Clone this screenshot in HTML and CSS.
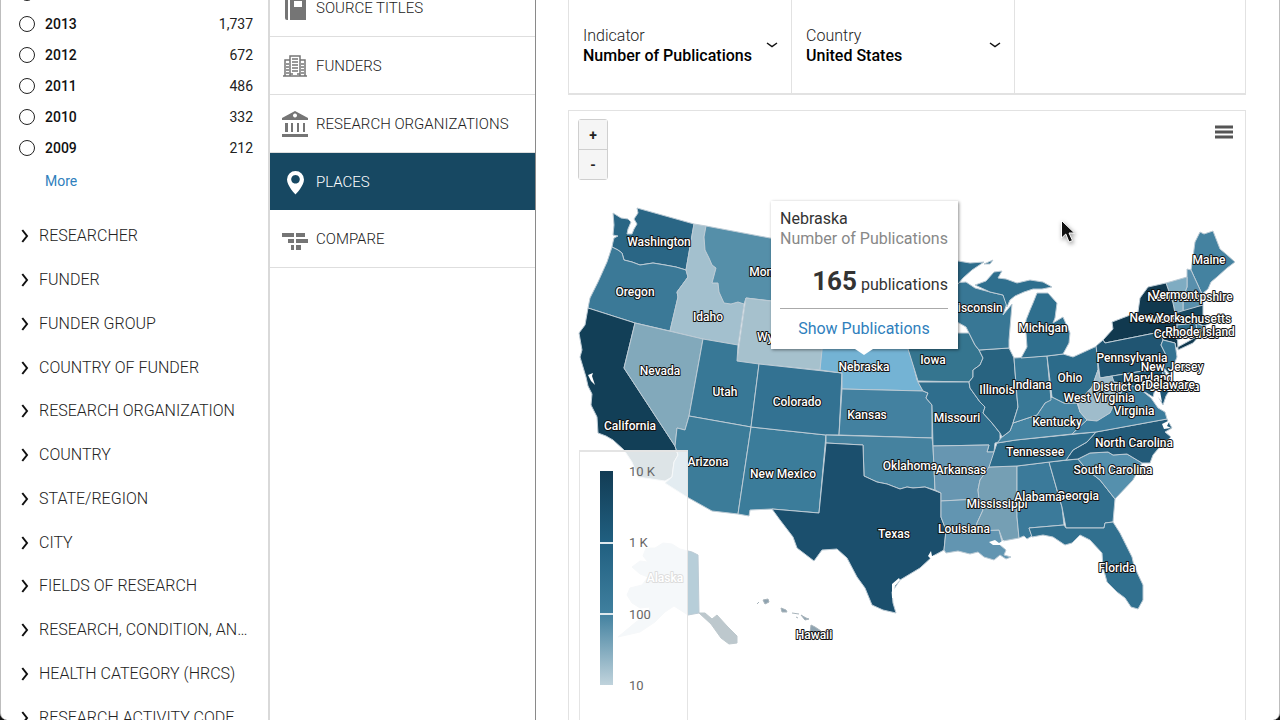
FILE: index.html
```html
<!DOCTYPE html>
<html lang="en">
<head>
<meta charset="utf-8">
<title>Places</title>
<link rel="stylesheet" href="styles.css">
</head>
<body>
<div class="app">
  <aside class="filters">
    <ul class="years">
      <li class="year"><label><input type="radio" name="year"><span>2014</span></label><span class="count">2,105</span></li>
      <li class="year"><label><input type="radio" name="year"><span>2013</span></label><span class="count">1,737</span></li>
      <li class="year"><label><input type="radio" name="year"><span>2012</span></label><span class="count">672</span></li>
      <li class="year"><label><input type="radio" name="year"><span>2011</span></label><span class="count">486</span></li>
      <li class="year"><label><input type="radio" name="year"><span>2010</span></label><span class="count">332</span></li>
      <li class="year"><label><input type="radio" name="year"><span>2009</span></label><span class="count">212</span></li>
    </ul>
    <a class="more" href="#">More</a>
    <ul class="facets">
      <li><button class="facet"><svg width="8" height="14" viewBox="0 0 8 14"><path d="M1.300 1 L6 7 L1.300 13"/></svg>RESEARCHER</button></li>
      <li><button class="facet"><svg width="8" height="14" viewBox="0 0 8 14"><path d="M1.300 1 L6 7 L1.300 13"/></svg>FUNDER</button></li>
      <li><button class="facet"><svg width="8" height="14" viewBox="0 0 8 14"><path d="M1.300 1 L6 7 L1.300 13"/></svg>FUNDER GROUP</button></li>
      <li><button class="facet"><svg width="8" height="14" viewBox="0 0 8 14"><path d="M1.300 1 L6 7 L1.300 13"/></svg>COUNTRY OF FUNDER</button></li>
      <li><button class="facet"><svg width="8" height="14" viewBox="0 0 8 14"><path d="M1.300 1 L6 7 L1.300 13"/></svg>RESEARCH ORGANIZATION</button></li>
      <li><button class="facet"><svg width="8" height="14" viewBox="0 0 8 14"><path d="M1.300 1 L6 7 L1.300 13"/></svg>COUNTRY</button></li>
      <li><button class="facet"><svg width="8" height="14" viewBox="0 0 8 14"><path d="M1.300 1 L6 7 L1.300 13"/></svg>STATE/REGION</button></li>
      <li><button class="facet"><svg width="8" height="14" viewBox="0 0 8 14"><path d="M1.300 1 L6 7 L1.300 13"/></svg>CITY</button></li>
      <li><button class="facet"><svg width="8" height="14" viewBox="0 0 8 14"><path d="M1.300 1 L6 7 L1.300 13"/></svg>FIELDS OF RESEARCH</button></li>
      <li><button class="facet"><svg width="8" height="14" viewBox="0 0 8 14"><path d="M1.300 1 L6 7 L1.300 13"/></svg>RESEARCH, CONDITION, AN…</button></li>
      <li><button class="facet"><svg width="8" height="14" viewBox="0 0 8 14"><path d="M1.300 1 L6 7 L1.300 13"/></svg>HEALTH CATEGORY (HRCS)</button></li>
      <li><button class="facet"><svg width="8" height="14" viewBox="0 0 8 14"><path d="M1.300 1 L6 7 L1.300 13"/></svg>RESEARCH ACTIVITY CODE</button></li>
    </ul>
  </aside>

  <nav class="views">
    <a class="view" href="#">
      <svg width="28" height="28" viewBox="0 0 28 28"><path d="M4 2h3v24H6a2 2 0 0 1-2-2zM9 2h16v24H9z"/><path fill="#fff" d="M13 7h8v6h-8z"/></svg>
      SOURCE TITLES
    </a>
    <a class="view" href="#">
      <svg width="28" height="28" viewBox="0 0 28 28"><path fill="none" stroke="#757575" stroke-width="1.500" d="M9 24V4h10v20M9 8H4v16M19 8h5v16"/><path stroke="#757575" stroke-width="1.600" d="M11 7h6M11 10h6M11 13h6M11 16h6M11 19h6M5 12h3M5 15h3M5 18h3M5 21h3M20 12h3M20 15h3M20 18h3M20 21h3M2 24h24M9 22h3M16 22h3"/></svg>
      FUNDERS
    </a>
    <a class="view" href="#">
      <svg width="28" height="28" viewBox="0 0 28 28"><path fill-rule="evenodd" d="M14 1 27 8v2H1V8zM14 3.500a2 2 0 1 0 .01 0zM4 13h3v9H4zM10 13h2v9h-2zM16 13h2v9h-2zM22 13h2v9h-2zM1 24h26v3H1z"/></svg>
      RESEARCH ORGANIZATIONS
    </a>
    <a class="view active" href="#">
      <svg width="28" height="28" viewBox="0 0 28 28"><path fill-rule="evenodd" d="M14.500 3A8.500 8.500 0 0 0 6 11.500C6 18 14.500 26.500 14.500 26.500S23 18 23 11.500A8.500 8.500 0 0 0 14.500 3zM14.500 7a4.300 4.300 0 1 1-.01 0z"/></svg>
      PLACES
    </a>
    <a class="view" href="#">
      <svg width="28" height="28" viewBox="0 0 28 28"><path d="M1 8h12v4H1zM15 8h9v4h-9zM7 14h6v4H7zM15 14h12v4H15zM10 20h3v5h-3zM15 20h5v5h-5z"/></svg>
      COMPARE
    </a>
  </nav>

  <main class="content">
    <div class="selectors">
      <div class="selector">
        <label for="indicator">Indicator</label>
        <select id="indicator"><option>Number of Publications</option></select>
        <svg class="caret" width="12" height="8" viewBox="0 0 12 8"><path d="M1 2 L6 5.500 L11 2"/></svg>
      </div>
      <div class="selector">
        <label for="country">Country</label>
        <select id="country"><option>United States</option></select>
        <svg class="caret" width="12" height="8" viewBox="0 0 12 8"><path d="M1 2 L6 5.500 L11 2"/></svg>
      </div>
    </div>

    <section class="map-panel">
      <svg class="map" viewBox="569 111 676 609">
        <g class="states">
          <path fill="#2a6685" d="M637 208 694 224 686 270 676 267 665 265 653 263 640 265 632 262 624 260 622 253 618 250 612 247 613 242 614 238 618 236 613 235 614 225 613 213 621 218 628 219 631 222 628 229 627 234 632 234 634 229 637 224 634 219 638 213z"/>
          <path fill="#3b7997" d="M612 247 618 250 622 253 624 260 632 262 640 265 653 263 665 265 676 267 686 270 688 277 677 292 678 297 670 331 635 323 588 308 590 298 598 282 607 262z"/>
          <path fill="#a3c0ce" d="M694 224 706 226 704 237 705 250 709 258 712 265 716 268 712 283 718 283 719 292 724 303 731 304 738 302 744 304 738 345 703 339 670 331 678 297 677 292 688 277 686 270z"/>
          <path fill="#558fa9" d="M706 226 770 238 840 247 834 308 746 298 744 304 738 302 731 304 724 303 719 292 718 283 712 283 716 268 712 265 709 258 705 250 704 237z"/>
          <path fill="#a6c1cd" d="M746 298 828 308 820 370 759 364 737 361z"/>
          <path fill="#123f57" d="M588 308 635 323 624 368 675 446 678 455 674 462 672 477 665 481 638 477 632 462 624 450 613 440 606 436 598 433 597 417 591 405 592 394 588 386 586 377 580 357 582 350 579 333 585 325z"/>
          <path fill="#82a9bb" d="M635 323 703 339 689 416 685 430 677 428 675 446 624 368z"/>
          <path fill="#387896" d="M703 339 738 345 737 361 759 364 751 427 689 416z"/>
          <path fill="#3c7c99" d="M689 416 751 427 738 514 712 511 687 497 665 483 672 477 674 462 678 455 675 446 677 428 685 430z"/>
          <path fill="#3b7c9a" d="M751 427 826 435 819 513 772 509 750 510 749 516 738 514z"/>
          <path fill="#337292" d="M759 364 842 373 839 435 826 435 751 427z"/>
          <path fill="#74b3d4" d="M824 330 905 335 910 352 914 368 917 380 923 391 842 389 842 373 820 370z"/>
          <path fill="#4381a0" d="M842 389 923 391 928 393 926 398 932 405 932 438 839 435z"/>
          <path fill="#45829f" d="M826 435 932 438 933 446 935 490 925 487 913 488 907 487 900 489 887 484 877 482 864 476 863 445 826 443z"/>
          <path fill="#1b4f6d" d="M826 443 863 445 864 476 877 482 887 484 900 489 907 487 913 488 925 487 941 493 941 517 946 530 944 550 933 556 920 568 900 580 892 592 893 603 896 613 883 610 872 605 865 588 857 577 847 558 837 549 822 550 814 561 797 548 793 537 780 520 772 509 819 513z"/>
          <path fill="#35758f" d="M903 333 969 333 975 345 979 350 983 358 980 365 973 370 973 377 969 382 918 381 914 368z"/>
          <path fill="#2f6e8d" d="M918 382 969 382 970 388 980 402 985 407 983 413 992 423 1000 433 1000 442 995 443 994 452 987 452 989 445 933 446 932 405 926 398 928 393 923 391z"/>
          <path fill="#6796b1" d="M933 446 989 445 987 452 994 452 992 465 980 480 978 490 979 499 941 501 941 493 935 490z"/>
          <path fill="#6295b1" d="M941 501 979 499 983 510 977 523 976 531 999 530 1002 542 1000 545 1006 550 1004 555 1011 557 1006 559 1000 555 994 560 984 557 978 552 970 554 958 551 946 553 944 550 946 530 941 517z"/>
          <path fill="#759fb4" d="M989 467 1017 466 1017 517 1019 538 1003 541 999 530 976 531 977 523 983 510 979 499 978 490 980 480z"/>
          <path fill="#3b7a9a" d="M1017 466 1049 462 1057 490 1062 507 1064 525 1029 528 1032 536 1027 539 1024 536 1019 538 1017 517z"/>
          <path fill="#316f8e" d="M1049 462 1078 459 1087 470 1100 480 1115 499 1113 522 1105 523 1104 528 1066 528 1062 507 1057 490z"/>
          <path fill="#31708f" d="M1029 528 1064 525 1066 528 1104 528 1105 523 1113 522 1120 533 1132 557 1134 566 1143 585 1143 600 1138 609 1131 607 1125 598 1117 592 1107 582 1103 567 1102 553 1090 540 1080 535 1072 543 1065 545 1053 537 1043 535 1032 537z"/>
          <path fill="#5590ad" d="M1078 459 1090 453 1108 452 1113 455 1127 454 1142 463 1133 480 1115 499 1100 480 1087 470z"/>
          <path fill="#235b79" d="M1096 432 1167 419 1172 428 1165 432 1171 437 1158 449 1153 455 1150 463 1142 463 1127 454 1113 455 1108 452 1090 453 1078 459 1066 460 1073 450 1087 442z"/>
          <path fill="#2d6c8b" d="M997 443 1016 440 1096 432 1087 442 1073 450 1066 460 1017 466 989 467 994 452z"/>
          <path fill="#4584a2" d="M1002 437 1010 431 1013 423 1037 415 1045 403 1052 397 1064 403 1077 403 1080 412 1087 420 1072 434 1016 440 997 443z"/>
          <path fill="#286380" d="M979 350 1009 348 1014 358 1017 397 1018 407 1013 423 1010 431 1002 437 1000 433 992 423 983 413 985 407 980 402 970 388 969 382 973 377 973 370 980 365 983 358z"/>
          <path fill="#387896" d="M1014 358 1047 356 1051 400 1045 403 1037 415 1013 423 1018 407 1017 397z"/>
          <path fill="#2c6b8a" d="M1047 356 1063 354 1073 357 1097 346 1098 370 1092 387 1078 403 1064 403 1052 397z"/>
          <path fill="#387795" d="M950 283 966 282 975 288 990 292 1003 295 1007 303 1003 315 1012 304 1009 340 1009 348 979 350 975 345 969 333 966 327 950 318z"/>
          <path fill="#2e6d8c" d="M940 259 958 261 970 263 984 262 972 270 963 278 958 284 940 284zM984 264 993 260 990 264z"/>
          <path fill="#2f6f8e" d="M975 285 986 281 994 272 1002 271 998 278 1006 279 1017 283 1030 280 1043 282 1052 287 1042 289 1033 289 1024 292 1015 296 1010 300 1007 307 1003 295 990 292z"/>
          <path fill="#2f6f8e" d="M1037 293 1048 293 1057 303 1055 318 1053 323 1063 317 1070 333 1069 343 1063 354 1047 356 1021 358 1027 347 1026 333 1026 320 1030 310 1033 303z"/>
          <path fill="#4482a0" d="M1200 232 1204 234 1213 231 1220 249 1226 254 1235 262 1227 268 1217 277 1211 282 1208 289 1202 294 1191 270 1193 257 1195 242z"/>
          <path fill="#598fac" d="M1187 269 1191 270 1202 294 1203 305 1183 312 1183 297 1187 287z"/>
          <path fill="#7facc2" d="M1166 283 1187 277 1187 287 1183 297 1183 312 1175 313 1173 303z"/>
          <path fill="#11394f" d="M1166 283 1148 287 1140 298 1138 312 1112 322 1113 329 1103 340 1105 343 1160 332 1163 340 1175 343 1176 348 1200 335 1193 343 1178 350 1177 323 1173 303z"/>
          <path fill="#174760" d="M1175 313 1203 305 1203 315 1213 322 1204 326 1196 323 1177 325z"/>
          <path fill="#2e6b89" d="M1177 325 1196 323 1197 332 1177 340z"/>
          <path fill="#4685a3" d="M1196 323 1203 326 1201 331 1197 332z"/>
          <path fill="#205572" d="M1103 340 1105 343 1160 332 1163 340 1161 345 1167 357 1162 368 1100 378 1096 346z"/>
          <path fill="#347392" d="M1163 340 1175 343 1177 357 1170 375 1163 367 1167 357 1161 345z"/>
          <path fill="#9fbccb" d="M1098 370 1100 378 1112 376 1114 382 1128 384 1117 398 1110 413 1097 421 1087 420 1080 412 1078 403 1092 387z"/>
          <path fill="#3c7c9c" d="M1128 384 1140 389 1151 398 1158 408 1165 412 1167 419 1096 432 1072 434 1087 420 1097 421 1110 413 1117 398z"/>
          <path fill="#1f5674" d="M1112 376 1162 368 1165 386 1171 388 1166 396 1163 405 1159 398 1156 385 1153 397 1140 389 1128 384 1114 382z"/>
          <path fill="#457f9c" d="M1162 368 1165 372 1171 388 1165 386z"/>
          <path fill="#b7ced9" d="M698 555 692 552 680 549 672 544 663 543 655 548 646 548 643 556 648 562 640 561 632 567 640 574 648 577 642 585 630 588 627 595 632 603 640 608 650 607 648 614 636 622 618 637 640 632 655 622 665 612 674 606 688 615 699 613z"/>
          <path fill="#bdc8cd" stroke="#bdc8cd" d="M699 613 705 613 712 619 717 615 727 626 737 636 737 643 729 644 721 638 711 624z"/>
          <g fill="#8fa3b0" stroke="#a8b4bb"><path d="M763 600l5-1 1 3-4 2zM757 604l2-2M781 608l5 2 1 2-5 0zM792 613l7 1M796 617l2 1M801 615l5 3 3 1-4 1zM811 625l4 2 6 4-3 5-5 4-3-7z"/></g>
        </g>
        <g fill="#fff"><path d="M588 375l5-2-1 3 3 9-4-4-2-4zM892 584l7-6 1 2-5 6-2 12-1 0zM928 556l3-5 1 5 5-1-6 4zM1157 383l3 8 2 11-4-5-4-10zM1162 424l8-4-3 6 4 2-7 1zM989 542l6-2 4 3 5-3-2 5-9 0z"/></g>
        <g class="labels">
          <text x="659" y="246">Washington</text><text x="635" y="296">Oregon</text><text x="708" y="321">Idaho</text>
          <text x="773" y="276">Montana</text><text x="782" y="341">Wyoming</text><text x="660" y="375">Nevada</text>
          <text x="725" y="396">Utah</text><text x="630" y="430">California</text><text x="708" y="466">Arizona</text>
          <text x="797" y="406">Colorado</text><text x="783" y="478">New Mexico</text><text x="864" y="371">Nebraska</text>
          <text x="867" y="419">Kansas</text><text x="910" y="470">Oklahoma</text><text x="894" y="538">Texas</text>
          <text x="933" y="364">Iowa</text><text x="957" y="422">Missouri</text><text x="961" y="474">Arkansas</text>
          <text x="964" y="533">Louisiana</text><text x="997" y="508">Mississippi</text><text x="1078" y="500">Georgia</text>
          <text x="1038" y="501">Alabama</text><text x="1117" y="572">Florida</text><text x="1113" y="474">South Carolina</text>
          <text x="1134" y="447">North Carolina</text><text x="1035" y="456">Tennessee</text><text x="1057" y="426">Kentucky</text>
          <text x="975" y="312">Wisconsin</text><text x="1043" y="332">Michigan</text><text x="997" y="394">Illinois</text>
          <text x="1032" y="389">Indiana</text><text x="1070" y="382">Ohio</text><text x="1209" y="264">Maine</text>
          <text x="1190" y="301">New Hampshire</text><text x="1175" y="299">Vermont</text><text x="1190" y="323">Massachusetts</text>
          <text x="1155" y="322">New York</text><text x="1186" y="338">Connecticut</text><text x="1200" y="336">Rhode Island</text>
          <text x="1132" y="362">Pennsylvania</text><text x="1172" y="371">New Jersey</text><text x="1148" y="382">Maryland</text>
          <text x="1146" y="391">District of Columbia</text><text x="1170" y="389">Delaware</text>
          <text x="1099" y="402">West Virginia</text><text x="1134" y="415">Virginia</text>
          <text x="814" y="639">Hawaii</text><text x="665" y="582">Alaska</text>
        </g>
      </svg>

      <div class="zoom-buttons"><button>+</button><button>-</button></div>
      <button class="menu" aria-label="Chart menu"><svg width="18" height="14" viewBox="0 0 18 14"><path d="M0 2h18M0 7h18M0 12h18"/></svg></button>

      <div class="legend">
        <div class="scale"></div>
        <div class="ticks"><span>10 K</span><span>1 K</span><span>100</span><span>10</span></div>
      </div>

      <div class="tooltip">
        <div class="tip-name">Nebraska</div>
        <div class="tip-metric">Number of Publications</div>
        <div class="tip-value"><strong>165</strong> publications</div>
        <a class="tip-link" href="#">Show Publications</a>
      </div>

      <svg class="cursor" width="16" height="26" viewBox="0 0 16 26"><path d="M1.500 1.500V19L5.800 15 9 23 12.500 21.500 9 14H14.500z"/></svg>
    </section>
  </main>
</div>
</body>
</html>
```
FILE: styles.css
```css
* { box-sizing: border-box; }

body {
  margin: 0;
  background: #111;
  color: #222;
  font-family: Roboto, "Liberation Sans", sans-serif;
  font-size: 16px;
  line-height: 20px;
}

ul { list-style: none; margin: 0; padding: 0; }
a { color: #2f80bd; text-decoration: none; }
button, select { font: inherit; color: inherit; }

.app {
  display: flex;
  height: 100vh;
  overflow: hidden;
  background: #fff;
  border: solid #bdbdbd;
  border-width: 0 1px;
  border-radius: 0 0 7px 7px;
}

/* Filter column */
.filters {
  flex: none;
  width: 269px;
  border-right: 2px solid #d9d9d9;
}

.years { margin-top: -23px; padding: 0 15px 0 18px; }
.year {
  display: flex;
  align-items: center;
  justify-content: space-between;
  height: 31px;
  font-size: 14px;
}
.year label {
  display: flex;
  align-items: center;
  gap: 10px;
  color: #111;
  font-weight: 500;
}
.year input {
  appearance: none;
  width: 16px;
  height: 16px;
  margin: 0;
  border: 1px solid #222;
  border-radius: 50%;
}

.more { display: inline-block; margin: 8px 0 23px 44px; font-size: 14px; }

.facets li { height: 44px; }
.facets li:nth-child(4n) { height: 43px; }
.facet {
  display: flex;
  align-items: center;
  gap: 10px;
  width: 100%;
  height: 100%;
  padding: 0 16px 0 20px;
  border: 0;
  background: none;
  font-weight: 300;
  white-space: nowrap;
}
.facet svg { flex: none; fill: none; stroke: #111; stroke-width: 2; }

/* View navigation */
.views {
  flex: none;
  width: 266px;
  margin-top: -21px;
  border-right: 1px solid #8a8a8a;
}
.view {
  display: flex;
  align-items: center;
  gap: 7px;
  height: 58px;
  padding-left: 11px;
  border-bottom: 1px solid #dedede;
  color: #222;
  font-size: 15px;
  font-weight: 300;
}
.view svg { flex: none; fill: #757575; }
.view.active {
  height: 57px;
  border-bottom: 0;
  background: #174862;
  color: #fff;
}
.view.active svg { fill: #fff; }

/* Main area */
.content {
  flex: 1;
  min-width: 0;
  display: flex;
  flex-direction: column;
  gap: 15px;
  padding: 0 33px 0 32px;
}
.selectors {
  display: flex;
  flex: none;
  border: solid #e2e2e2;
  border-width: 0 1px 2px;
}
.selector {
  position: relative;
  width: 33%;
  padding: 26px 14px 27px;
  border-right: 1px solid #e2e2e2;
}
.selector label { display: block; font-weight: 300; }
.selector select {
  display: block;
  width: 100%;
  padding: 0;
  border: 0;
  appearance: none;
  background: none;
  color: #000;
  font-weight: 500;
}
.caret {
  position: absolute;
  top: 41px;
  right: 13px;
  fill: none;
  stroke: #111;
  stroke-width: 1.5;
}

.map-panel {
  position: relative;
  flex: 1;
  min-height: 0;
  border: solid #e2e2e2;
  border-width: 1px 1px 0;
}
.map { display: block; width: 100%; }
.states { stroke: #bccbd5; stroke-width: 1; stroke-linejoin: round; }
.labels {
  fill: #fff;
  stroke: #111;
  stroke-width: 2px;
  stroke-linejoin: round;
  paint-order: stroke;
  font-size: 12px;
  font-weight: 500;
  text-anchor: middle;
}

.zoom-buttons {
  position: absolute;
  top: 8px;
  left: 9px;
  display: flex;
  flex-direction: column;
  width: 30px;
  border: 1px solid #cfcfcf;
  border-radius: 3px;
}
.zoom-buttons button {
  height: 29px;
  padding: 0;
  border: 0;
  background: #f5f5f5;
  font-size: 14px;
  font-weight: 700;
}
.zoom-buttons button + button { height: 30px; border-top: 1px solid #cfcfcf; }

.menu {
  position: absolute;
  top: 14px;
  right: 12px;
  display: flex;
  padding: 0;
  border: 0;
  background: none;
}
.menu svg { stroke: #555; stroke-width: 3; }

.legend {
  position: absolute;
  top: 339px;
  bottom: 0;
  left: 10px;
  display: flex;
  gap: 16px;
  width: 109px;
  padding: 19px 20px;
  border: solid #e4e4e4;
  border-width: 2px 1px 0;
  background: rgba(255, 255, 255, 0.86);
}
.scale {
  width: 13px;
  height: 214px;
  background:
    linear-gradient(#dfe9ee, #dfe9ee) 0 71px / 100% 2px no-repeat,
    linear-gradient(#dfe9ee, #dfe9ee) 0 142px / 100% 2px no-repeat,
    linear-gradient(#123c54, #205f80 33%, #3f7f9e 66%, #c0d3dc);
}
.ticks {
  display: flex;
  flex-direction: column;
  justify-content: space-between;
  height: 234px;
  margin-top: -9px;
  color: #666;
  font-size: 13px;
}

.tooltip {
  position: absolute;
  top: 90px;
  left: 202px;
  padding: 8px 10px 10px 9px;
  background: #fff;
  box-shadow: 1px 1px 3px rgba(0, 0, 0, 0.45);
  color: #333;
  white-space: nowrap;
}
.tooltip::after {
  content: "";
  position: absolute;
  left: 84px;
  bottom: -6px;
  border: solid transparent;
  border-width: 0 9px;
  border-top: 6px solid #fff;
}
.tip-metric { color: #888; }
.tip-value {
  padding: 20px 0 11px;
  border-bottom: 1px solid #aaa;
  line-height: 24px;
  text-align: right;
}
.tip-value strong { font-size: 26px; }
.tip-link { display: block; margin-top: 10px; text-align: center; }

.cursor {
  position: absolute;
  top: 108px;
  left: 491px;
  fill: #111;
  stroke: #fff;
  stroke-width: 1;
  filter: drop-shadow(1px 2px 2px rgba(0, 0, 0, 0.4));
}
```
